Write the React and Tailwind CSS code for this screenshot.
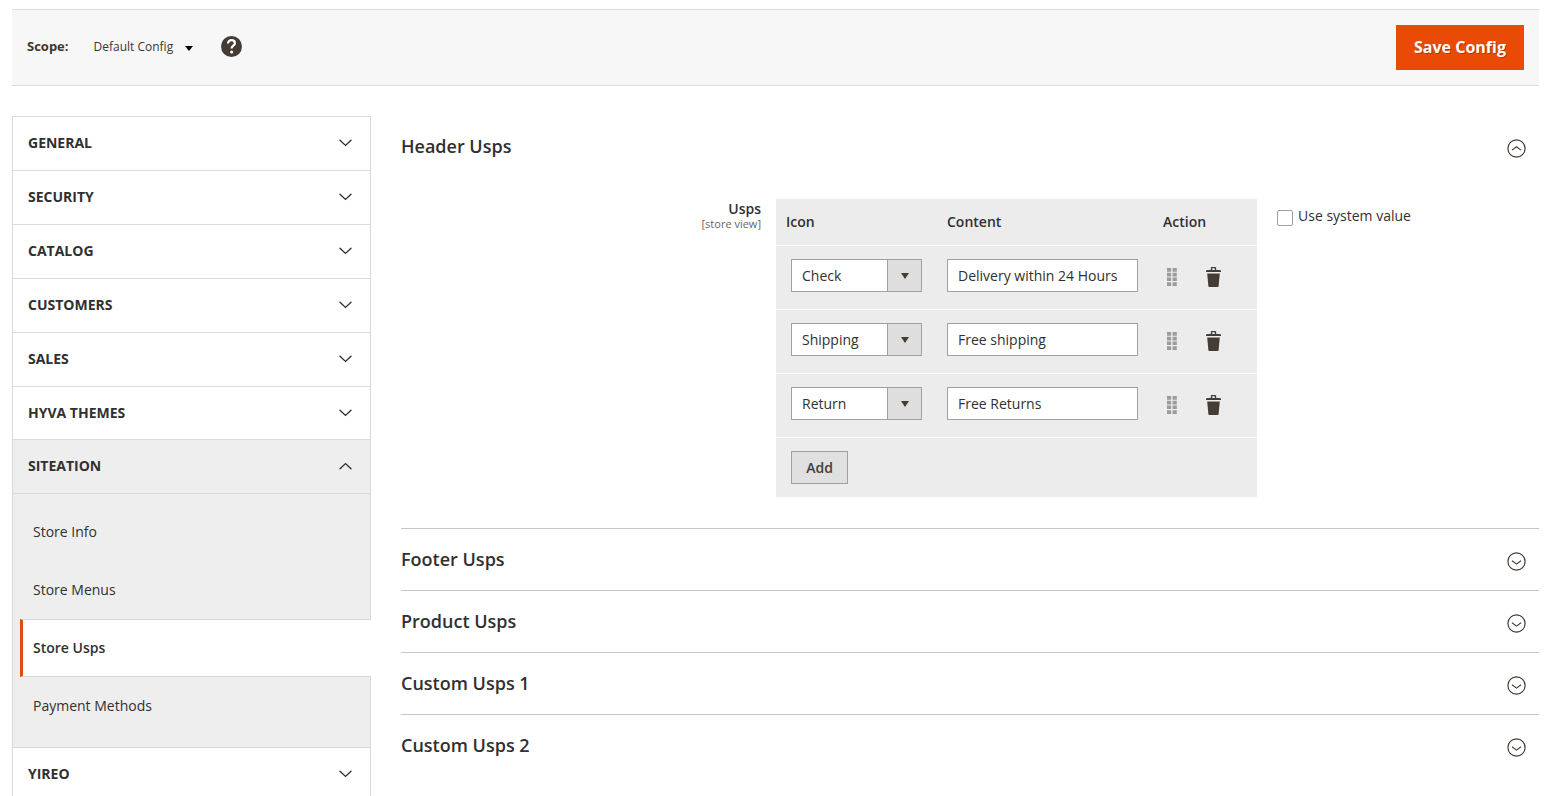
import { useState } from 'react'

const sidebarTop = ['General', 'Security', 'Catalog', 'Customers', 'Sales', 'Hyva Themes']
const siteationPages = ['Store Info', 'Store Menus', 'Store Usps', 'Payment Methods']
const closedSections = ['Footer Usps', 'Product Usps', 'Custom Usps 1', 'Custom Usps 2']
const initialRows = [
  { id: 1, icon: 'Check', content: 'Delivery within 24 Hours' },
  { id: 2, icon: 'Shipping', content: 'Free shipping' },
  { id: 3, icon: 'Return', content: 'Free Returns' },
]

function Chevron({ up }) {
  return (
    <svg width="13" height="8" viewBox="0 0 13 8" fill="none" stroke="currentColor" strokeWidth="1.4" strokeLinecap="round" aria-hidden="true">
      <path d={up ? 'M1 6.8 6.5 1.6 12 6.8' : 'M1 1.2 6.5 6.4 12 1.2'} />
    </svg>
  )
}

function CircleChevron({ up }) {
  return (
    <svg width="19" height="19" viewBox="0 0 19 19" className="mt-[5px]" fill="none" stroke="#41362f" strokeWidth="1.15" aria-hidden="true">
      <circle cx="9.5" cy="9.5" r="8.6" />
      <path d={up ? 'M5 11.1 9.5 7.8 14 11.1' : 'M5 8.8 9.5 12.1 14 8.8'} />
    </svg>
  )
}

function HelpIcon() {
  return (
    <svg width="21" height="21" viewBox="0 0 21 21" aria-hidden="true">
      <circle cx="10.5" cy="10.5" r="10.5" fill="#463c36" />
      <path d="M7 7.4C7 5.4 8.5 4.2 10.5 4.2s3.4 1.1 3.4 3c0 2.4-3.3 2.6-3.3 5.2" fill="none" stroke="#fff" strokeWidth="2.2" />
      <circle cx="10.6" cy="16" r="1.5" fill="#fff" />
    </svg>
  )
}

function DragIcon() {
  return (
    <svg width="10" height="18" viewBox="0 0 10 18" fill="#9b9b9b" aria-hidden="true">
      <path d="M0 0h4.2v3.8H0zM5.6 0h4.2v3.8H5.600zM0 4.8h4.2v3.600H0zM5.600 4.8h4.2v3.600H5.600zM0 9.500h4.2v3.600H0zM5.600 9.500h4.2v3.600H5.600zM0 14.200h4.2V18H0zM5.600 14.200h4.2V18H5.600z" />
    </svg>
  )
}

function TrashIcon() {
  return (
    <svg width="15" height="20" viewBox="0 0 15 20" fill="#463c36" aria-hidden="true">
      <path fillRule="evenodd" d="M4.800 3V1Q4.800 0 5.800 0H9.200Q10.200 0 10.200 1V3H13.500Q15 3 15 4.300V5H0V4.300Q0 3 1.500 3ZM6.200 3H8.800V1.300H6.200Z" />
      <path d="M1.200 6.400h12.600L12.600 19.300q-.1.700-.8.700H3.200q-.7 0-.8-.7Z" />
    </svg>
  )
}

function SidebarHeading({ label, open }) {
  return (
    <button
      type="button"
      aria-expanded={!!open}
      className={`flex w-full items-center justify-between border-t border-[#d9d9d9] pr-[18px] pb-[2px] pl-[15px] text-left text-sm font-bold uppercase ${open ? '-mt-px h-[55px] border-b bg-[#eeeeee]' : 'h-[54px]'}`}
    >
      {label}
      <Chevron up={open} />
    </button>
  )
}

function Sidebar() {
  return (
    <nav aria-label="Configuration" className="w-[359px] shrink-0 border-x border-[#d9d9d9]">
      {sidebarTop.map((label) => (
        <SidebarHeading key={label} label={label} />
      ))}
      <SidebarHeading label="Siteation" open />
      <ul className="bg-[#eeeeee] pt-[9px] pb-3 pl-[7px]">
        {siteationPages.map((label) => {
          const current = label === 'Store Usps'
          return (
            <li key={label}>
              <a
                href="#"
                aria-current={current ? 'page' : undefined}
                className={
                  current
                    ? 'relative -mr-px flex h-[58px] items-center border-y border-l-[3px] border-y-[#d9d9d9] border-l-[#d94f14] bg-white pl-[10px] text-sm font-semibold'
                    : 'flex h-[58px] items-center border-l-[3px] border-transparent pl-[10px] text-sm'
                }
              >
                {label}
              </a>
            </li>
          )
        })}
      </ul>
      <SidebarHeading label="Yireo" />
    </nav>
  )
}

function SectionHeading({ label, open }) {
  return (
    <h2>
      <button type="button" aria-expanded={!!open} className="flex h-[61px] w-full items-center justify-between pr-[13px] pb-[2px] text-left text-lg font-semibold">
        {label}
        <CircleChevron up={open} />
      </button>
    </h2>
  )
}

function UspTable() {
  const [rows, setRows] = useState(initialRows)
  const update = (id, patch) => setRows(rows.map((r) => (r.id === id ? { ...r, ...patch } : r)))
  const add = () => setRows([...rows, { id: Date.now(), icon: 'Check', content: '' }])

  return (
    <table className="w-full table-fixed border-collapse bg-[#ececec] text-left text-sm">
      <colgroup>
        <col className="w-[161px]" />
        <col className="w-[216px]" />
        <col />
      </colgroup>
      <thead>
        <tr className="h-[46px]">
          <th className="px-[10px] font-semibold">Icon</th>
          <th className="px-[10px] font-semibold">Content</th>
          <th className="px-[10px] font-semibold">Action</th>
        </tr>
      </thead>
      <tbody>
        {rows.map((row) => (
          <tr key={row.id} className="h-16 border-t border-white">
            <td className="pt-[13px] pl-[15px] align-top">
              <div className="relative w-[131px]">
                <select
                  aria-label="Icon"
                  value={row.icon}
                  onChange={(e) => update(row.id, { icon: e.target.value })}
                  className="block h-[33px] w-full appearance-none border border-[#a0a0a0] bg-white pt-[2px] pr-9 pl-[10px] text-sm"
                >
                  <option>Check</option>
                  <option>Shipping</option>
                  <option>Return</option>
                </select>
                <span className="pointer-events-none absolute inset-y-0 right-0 flex w-[35px] items-center justify-center border border-[#a0a0a0] bg-[#dedede] pt-[2px]">
                  <svg width="8" height="6" viewBox="0 0 8 6" fill="#463c36" aria-hidden="true">
                    <path d="M0 0h8L4 6z" />
                  </svg>
                </span>
              </div>
            </td>
            <td className="pt-[13px] pl-[10px] align-top">
              <input
                type="text"
                aria-label="Content"
                value={row.content}
                onChange={(e) => update(row.id, { content: e.target.value })}
                className="block h-[33px] w-[191px] border border-[#a0a0a0] bg-white px-[10px] text-sm"
              />
            </td>
            <td className="pt-[13px] pl-[14px] align-top">
              <div className="flex h-9 items-center gap-[29px]">
                <button type="button" aria-label="Move row" className="cursor-move">
                  <DragIcon />
                </button>
                <button type="button" aria-label="Delete row" onClick={() => setRows(rows.filter((r) => r.id !== row.id))}>
                  <TrashIcon />
                </button>
              </div>
            </td>
          </tr>
        ))}
      </tbody>
      <tfoot>
        <tr className="h-[60px] border-t border-white">
          <td colSpan={3} className="pt-[13px] pl-[15px] align-top">
            <button type="button" onClick={add} className="block h-[33px] w-[57px] border border-[#a0a0a0] bg-[#e0e0e0] pt-[2px] text-sm font-semibold text-[#463c36]">
              Add
            </button>
          </td>
        </tr>
      </tfoot>
    </table>
  )
}

export default function App() {
  return (
    <div className="bg-white pt-[9px] pr-4 pl-3 font-['Open_Sans',sans-serif] text-[#303030]">
      <header className="flex h-[77px] items-center justify-between border-y border-[#dcdcdc] bg-[#f7f7f7] px-[15px]">
        <div className="flex items-center pb-[2px] text-[#41362f]">
          <span className="text-[13px] font-bold">Scope:</span>
          <button type="button" className="ml-[25px] flex items-center gap-3 text-xs">
            Default Config
            <svg width="8" height="5" viewBox="0 0 8 5" className="mt-1" fill="#000" aria-hidden="true">
              <path d="M0 0h8L4 5z" />
            </svg>
          </button>
          <a href="#" aria-label="What is this?" className="ml-7">
            <HelpIcon />
          </a>
        </div>
        <button type="button" className="h-[45px] w-32 bg-[#e94b06] pb-[2px] text-base font-bold text-white [text-shadow:1px_1px_0_rgba(0,0,0,0.25)]">
          Save Config
        </button>
      </header>

      <div className="mt-[30px] flex items-start gap-[30px]">
        <Sidebar />
        <main className="min-w-0 flex-1">
          <section>
            <SectionHeading label="Header Usps" open />
            <div className="grid grid-cols-[375fr_481px_282fr] pt-[22px] pb-[31px]">
              <div className="pt-[2px] pr-[15px] text-right">
                <div className="text-sm leading-4 font-semibold">Usps</div>
                <div className="text-[11px] leading-[14px] text-[#666666]">[store view]</div>
              </div>
              <UspTable />
              <div className="pt-2 pl-5">
                <label className="flex items-start gap-[5px] text-sm leading-[18px]">
                  <input type="checkbox" className="mt-[3px] h-4 w-4 appearance-none rounded-[2px] border border-[#a0a0a0] bg-white checked:bg-[#41362f]" />
                  Use system value
                </label>
              </div>
            </div>
          </section>
          {closedSections.map((label) => (
            <section key={label} className="border-t border-[#c6c6c6]">
              <SectionHeading label={label} />
            </section>
          ))}
        </main>
      </div>
    </div>
  )
}
